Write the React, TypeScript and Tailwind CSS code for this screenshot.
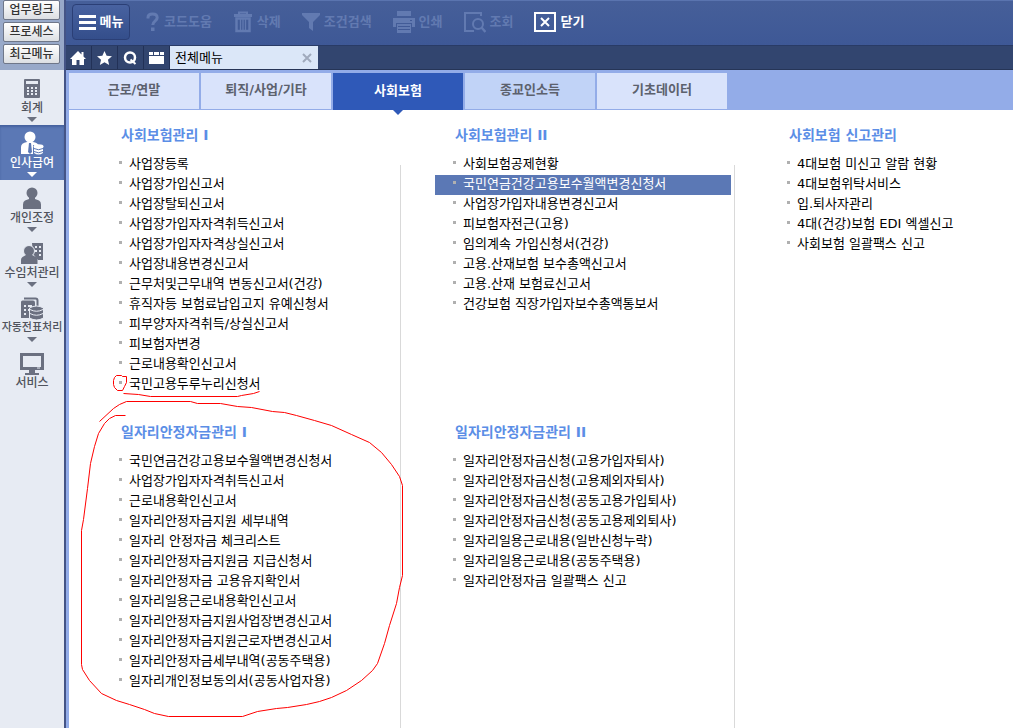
import type { ReactNode } from 'react';
import clsx from 'clsx';

// ── 타입 ──────────────────────────────────────────────────────────────────────
interface MenuGroup {
  title: string;
  items: string[];
}

interface ToolItem {
  label: string;
  icon: ReactNode;
  enabled?: boolean;
}

interface SideItem {
  label: string;
  icon: ReactNode;
  small?: boolean;
  active?: boolean;
  expandable?: boolean;
}

// ── 툴바 아이콘 ───────────────────────────────────────────────────────────────
const HelpIcon = () => (
  <svg width="14" height="20" viewBox="0 0 14 20" fill="none" aria-hidden="true">
    <path d="M2 6.5V5.5C2 3 4 2 6.5 2S11.2 3.2 11.2 5.8C11.2 9 6.8 8.8 6.8 13" stroke="currentColor" strokeWidth="3" />
    <path d="M5 15.5h3.5V19H5z" fill="currentColor" />
  </svg>
);

const TrashIcon = () => (
  <svg width="20" height="22" viewBox="0 0 20 22" fill="none" stroke="currentColor" aria-hidden="true">
    <path d="M1 4.5h18" strokeWidth="3" />
    <path d="M6 3V1.5h8V3" strokeWidth="2" />
    <path d="M3.5 7.5h13V20h-13z" strokeWidth="2.5" />
    <path d="M7.5 8v11M10 8v11M12.5 8v11" strokeWidth="1.3" />
  </svg>
);

const FunnelIcon = () => (
  <svg width="18" height="20" viewBox="0 0 18 20" fill="currentColor" aria-hidden="true">
    <path d="M0 1h18v2l-7 7v9l-4-3v-6L0 3z" />
  </svg>
);

const PrinterIcon = () => (
  <svg width="22" height="22" viewBox="0 0 22 22" aria-hidden="true">
    <path d="M4 0h14v5H4zM0 7h22v9h-3v-4H3v4H0z" fill="currentColor" />
    <path d="M4 13h14v9H4z" fill="currentColor" />
    <path d="M5 15.5h12M5 18.5h12" stroke="#405996" />
    <path d="M17 9h2v1h-2z" fill="#405996" />
  </svg>
);

const LookupIcon = () => (
  <svg width="22" height="21" viewBox="0 0 22 21" fill="none" stroke="currentColor" aria-hidden="true">
    <path d="M17 4V1H1v18h9" strokeWidth="2" />
    <circle cx="14" cy="12" r="5" strokeWidth="2" />
    <path d="m17.5 15.5 4 4.5" strokeWidth="2.5" />
  </svg>
);

const CloseBoxIcon = () => (
  <svg width="22" height="20" viewBox="0 0 22 20" fill="none" stroke="currentColor" strokeWidth="2" aria-hidden="true">
    <path d="M1 1h20v18H1z" />
    <path d="m7 6 8 8M15 6l-8 8" />
  </svg>
);

// ── 탭바 아이콘 ───────────────────────────────────────────────────────────────
const HomeIcon = () => (
  <svg width="16" height="14" viewBox="0 0 16 14" fill="currentColor" aria-hidden="true">
    <path d="M8 0 0 8h2v6h4.500V9h3v5H14V8h2L13.500 5.500V1h-2v2.500z" />
  </svg>
);

const StarIcon = () => (
  <svg width="15" height="14" viewBox="0 0 16 15" fill="currentColor" aria-hidden="true">
    <path d="m8 0 2.300 5.200L16 5.700l-4.300 3.800L13 15l-5-3-5 3 1.300-5.500L0 5.700l5.700-.5z" />
  </svg>
);

const SearchIcon = () => (
  <svg width="14" height="14" viewBox="0 0 14 14" fill="none" stroke="currentColor" aria-hidden="true">
    <circle cx="7" cy="6.500" r="5" strokeWidth="2.500" />
    <path d="m7.500 8.500 5 4.500" strokeWidth="2" />
  </svg>
);

const BoardIcon = () => (
  <svg width="15" height="13" viewBox="0 0 15 13" fill="currentColor" aria-hidden="true">
    <path d="M0 5h15v8H0zM0 1h4v3H0zM5 1h5v3H5zM11 1h4v3h-4z" />
  </svg>
);

// ── 사이드바 아이콘 ───────────────────────────────────────────────────────────
const CalculatorIcon = () => (
  <svg width="16" height="19" viewBox="0 0 16 19" aria-hidden="true">
    <rect width="16" height="19" rx="1" fill="currentColor" />
    <path
      d="M2 2h12v3H2zM3 8h2v2H3zM7 8h2v2H7zM11 8h2v2h-2zM3 11h2v2H3zM7 11h2v2H7zM11 11h2v2h-2zM3 14h2v2H3zM7 14h2v2H7zM11 14h2v2h-2z"
      fill="#e7ebf3"
    />
  </svg>
);

const PayrollIcon = () => (
  <svg width="24" height="24" viewBox="0 0 24 24" aria-hidden="true">
    <circle cx="10" cy="6" r="5.500" fill="currentColor" />
    <path d="M1 23v-7q0-4 6-5h6q5 1 5 3h-5v9z" fill="currentColor" />
    <path d="M9 12h2l1 9-2 2-2-2z" fill="#5b78b5" />
    <path d="M13 15.500h11V24H13z" fill="#5b78b5" />
    <path d="M14 16v6q4.500 3 9 0v-6" fill="currentColor" />
    <ellipse cx="18.500" cy="15.500" rx="5" ry="2.200" fill="currentColor" />
    <path d="M14 17.500q4.500 2.500 9 0M14 20.500q4.500 2.500 9 0" fill="none" stroke="#5b78b5" />
  </svg>
);

const PersonIcon = () => (
  <svg width="20" height="22" viewBox="0 0 20 22" fill="currentColor" aria-hidden="true">
    <circle cx="10" cy="6" r="5.500" />
    <path d="M7 9h6v3l4 1.500q2 1 2 4V22H1v-4.500q0-3 2-4L7 12z" />
  </svg>
);

const ClientIcon = () => (
  <svg width="22" height="22" viewBox="0 0 22 22" fill="currentColor" aria-hidden="true">
    <path d="M11 1h11v17h-5l-5-6z" />
    <path d="M14 4h2v2h-2zM18 4h2v2h-2zM14 8h2v2h-2zM18 8h2v2h-2zM18 12h2v2h-2z" fill="#e7ebf3" />
    <circle cx="8" cy="9" r="5.500" stroke="#e7ebf3" />
    <path d="M5 13h6l4 2q1.500 1 1.500 3v4H0v-4q0-2 1.500-3z" />
  </svg>
);

const SlipIcon = () => (
  <svg width="24" height="23" viewBox="0 0 24 23" aria-hidden="true">
    <path d="M4 1.500h11.500q2 0 2 2V10" fill="none" stroke="currentColor" strokeWidth="2" />
    <path d="M2.500 3.500H13q2 0 2 2V21H1V5q0-1.500 1.500-1.500z" fill="currentColor" />
    <path d="M4 8h2v2H4zM8 8h4v2H8zM4 12h2v2H4zM8 12h2v2H8zM4 16h2v2H4z" fill="#e7ebf3" />
    <path d="M9.500 11v10q7 4 14 0V11q-7-4-14 0z" fill="currentColor" stroke="#e7ebf3" />
    <path d="M10 12.500q6.500 3.500 13 0M10 16.500q6.500 3.500 13 0" fill="none" stroke="#e7ebf3" />
  </svg>
);

const MonitorIcon = () => (
  <svg width="24" height="23" viewBox="0 0 24 23" aria-hidden="true">
    <path d="M1.500 2.500h21v14h-21z" fill="none" stroke="currentColor" strokeWidth="3" />
    <path d="M9 18h6v3h4v2H5v-2h4z" fill="currentColor" />
    <path d="M17 15.500h3v1h-3z" fill="#e7ebf3" />
  </svg>
);

// ── 데이터 ────────────────────────────────────────────────────────────────────
const QUICK_LINKS = ['업무링크', '프로세스', '최근메뉴'];

const SIDE_ITEMS: SideItem[] = [
  { label: '회계', icon: <CalculatorIcon />, expandable: true },
  { label: '인사급여', icon: <PayrollIcon />, expandable: true, active: true },
  { label: '개인조정', icon: <PersonIcon />, expandable: true },
  { label: '수임처관리', icon: <ClientIcon />, expandable: true },
  { label: '자동전표처리', icon: <SlipIcon />, expandable: true, small: true },
  { label: '서비스', icon: <MonitorIcon /> },
];

const TOOLS: ToolItem[] = [
  { label: '코드도움', icon: <HelpIcon /> },
  { label: '삭제', icon: <TrashIcon /> },
  { label: '조건검색', icon: <FunnelIcon /> },
  { label: '인쇄', icon: <PrinterIcon /> },
  { label: '조회', icon: <LookupIcon /> },
  { label: '닫기', icon: <CloseBoxIcon />, enabled: true },
];

const SHORTCUTS = [
  { label: '홈', icon: <HomeIcon /> },
  { label: '즐겨찾기', icon: <StarIcon /> },
  { label: '검색', icon: <SearchIcon /> },
  { label: '달력', icon: <BoardIcon /> },
];

const CATEGORIES = ['근로/연말', '퇴직/사업/기타', '사회보험', '종교인소득', '기초데이터'];
const ACTIVE_CATEGORY = '사회보험';
const HOVERED_CATEGORY = '종교인소득';

const COLUMNS: MenuGroup[][] = [
  [
    {
      title: '사회보험관리 I',
      items: [
        '사업장등록',
        '사업장가입신고서',
        '사업장탈퇴신고서',
        '사업장가입자자격취득신고서',
        '사업장가입자자격상실신고서',
        '사업장내용변경신고서',
        '근무처및근무내역 변동신고서(건강)',
        '휴직자등 보험료납입고지 유예신청서',
        '피부양자자격취득/상실신고서',
        '피보험자변경',
        '근로내용확인신고서',
        '국민고용두루누리신청서',
      ],
    },
    {
      title: '일자리안정자금관리 I',
      items: [
        '국민연금건강고용보수월액변경신청서',
        '사업장가입자자격취득신고서',
        '근로내용확인신고서',
        '일자리안정자금지원 세부내역',
        '일자리 안정자금 체크리스트',
        '일자리안정자금지원금 지급신청서',
        '일자리안정자금 고용유지확인서',
        '일자리일용근로내용확인신고서',
        '일자리안정자금지원사업장변경신고서',
        '일자리안정자금지원근로자변경신고서',
        '일자리안정자금세부내역(공동주택용)',
        '일자리개인정보동의서(공동사업자용)',
      ],
    },
  ],
  [
    {
      title: '사회보험관리 II',
      items: [
        '사회보험공제현황',
        '국민연금건강고용보수월액변경신청서',
        '사업장가입자내용변경신고서',
        '피보험자전근(고용)',
        '임의계속 가입신청서(건강)',
        '고용.산재보험 보수총액신고서',
        '고용.산재 보험료신고서',
        '건강보험 직장가입자보수총액통보서',
      ],
    },
    {
      title: '일자리안정자금관리 II',
      items: [
        '일자리안정자금신청(고용가입자퇴사)',
        '일자리안정자금신청(고용제외자퇴사)',
        '일자리안정자금신청(공동고용가입퇴사)',
        '일자리안정자금신청(공동고용제외퇴사)',
        '일자리일용근로내용(일반신청누락)',
        '일자리일용근로내용(공동주택용)',
        '일자리안정자금 일괄팩스 신고',
      ],
    },
  ],
  [
    {
      title: '사회보험 신고관리',
      items: [
        '4대보험 미신고 알람 현황',
        '4대보험위탁서비스',
        '입.퇴사자관리',
        '4대(건강)보험 EDI 엑셀신고',
        '사회보험 일괄팩스 신고',
      ],
    },
  ],
];

// ── 사이드바 ──────────────────────────────────────────────────────────────────
const Sidebar = () => (
  <aside className="flex w-[66px] shrink-0 flex-col border-r-2 border-[#445486] bg-[#e7ebf3]">
    <div className="flex h-[70px] flex-col justify-end gap-0.5 bg-[#98a9c9] pr-1 pb-1.5 pl-[3px]">
      {QUICK_LINKS.map((label) => (
        <button
          key={label}
          type="button"
          className="h-5 shrink-0 rounded-xs border border-[#6f7789] bg-linear-to-b from-white to-[#dcdfe3] text-[12px] leading-4 font-medium text-[#333]"
        >
          {label}
        </button>
      ))}
    </div>
    <nav className="flex flex-col">
      {SIDE_ITEMS.map((item) => (
        <button
          key={item.label}
          type="button"
          className={clsx(
            'flex h-[55px] flex-col items-center pt-1.5 font-medium whitespace-nowrap',
            item.active ? 'bg-[#5b78b5] text-white shadow-[inset_0_2px_2px_#4763a0]' : 'text-[#6b7080]',
          )}
        >
          <span className="flex h-6 items-center">{item.icon}</span>
          <span
            className={clsx(
              'leading-4',
              item.small ? 'text-[11px]' : 'text-[12px]',
              item.active ? 'text-white' : 'text-[#50535c]',
            )}
          >
            {item.label}
          </span>
          {item.expandable && (
            <svg className="mt-px" width="10" height="5" viewBox="0 0 10 5" fill="currentColor" aria-hidden="true">
              <path d="M0 0h10L5 5z" />
            </svg>
          )}
        </button>
      ))}
    </nav>
  </aside>
);

// ── 상단 툴바 ─────────────────────────────────────────────────────────────────
const Toolbar = () => (
  <div className="flex h-[46px] items-center border-t border-b border-t-[#5a74af] border-b-[#293b66] bg-linear-to-b from-[#465f99] to-[#3e5896] pb-0.5 pl-1.5">
    <button
      type="button"
      className="mr-4 flex h-9 w-[58px] items-center justify-center gap-1 rounded-sm border border-[#2b3f76] bg-linear-to-b from-[#4862a0] to-[#344e8b] text-[13px] font-bold text-white"
    >
      <svg width="17" height="15" viewBox="0 0 17 15" fill="currentColor" aria-hidden="true">
        <path d="M0 0h17v3H0zM0 6h17v3H0zM0 12h17v3H0z" />
      </svg>
      메뉴
    </button>
    <div className="flex gap-[21px]">
      {TOOLS.map((tool) => (
        <button
          key={tool.label}
          type="button"
          disabled={!tool.enabled}
          className={clsx(
            'flex items-center gap-1 text-[13px] font-bold whitespace-nowrap',
            tool.enabled ? 'text-white' : 'text-[#627ab1]',
          )}
        >
          {tool.icon}
          {tool.label}
        </button>
      ))}
    </div>
  </div>
);

// ── 열린 화면 탭 ──────────────────────────────────────────────────────────────
const WindowTabs = () => (
  <div className="flex h-6 border-b border-[#263557] bg-[#32456f]">
    {SHORTCUTS.map((item) => (
      <button
        key={item.label}
        type="button"
        aria-label={item.label}
        className="flex w-[26px] items-center justify-center border-r border-[#223157] pr-px text-white"
      >
        {item.icon}
      </button>
    ))}
    <div className="flex w-[148px] items-center justify-between bg-[#dbe7f8] pr-1.5 pl-[5px]">
      <span className="text-[13px] leading-5 text-black">전체메뉴</span>
      <button type="button" aria-label="닫기" className="text-[#a0aabd]">
        <svg width="10" height="10" viewBox="0 0 10 10" stroke="currentColor" strokeWidth="2" aria-hidden="true">
          <path d="m1 1 8 8M9 1 1 9" />
        </svg>
      </button>
    </div>
  </div>
);

// ── 카테고리 탭 ───────────────────────────────────────────────────────────────
const CategoryTabs = () => (
  <nav className="flex h-10 gap-0.5 bg-[#93ace8] pt-[3px]">
    {CATEGORIES.map((label) => {
      const active = label === ACTIVE_CATEGORY;
      return (
        <button
          key={label}
          type="button"
          className={clsx(
            'relative w-[130px] pb-0.5 text-[13px] font-bold whitespace-nowrap',
            active && 'bg-[#2f59b8] text-white',
            !active && 'mb-px text-[#5c616d]',
            !active && (label === HOVERED_CATEGORY ? 'bg-[#c1d3f7]' : 'bg-[#d9e3fb]'),
          )}
        >
          {label}
          {active && (
            <svg className="absolute top-full left-[60px]" width="10" height="5" viewBox="0 0 10 5" aria-hidden="true">
              <path d="M0 0h10L5 5z" fill="#2f59b8" />
            </svg>
          )}
        </button>
      );
    })}
  </nav>
);

// ── 메뉴 그룹 ─────────────────────────────────────────────────────────────────
const MenuSection = ({ group, selected }: { group: MenuGroup; selected?: string }) => (
  <section className="min-h-[297px]">
    <h2 className="mb-2.5 pl-5 text-[14px] leading-5 font-bold text-[#5b8ee6]">{group.title}</h2>
    <ul>
      {group.items.map((item) => (
        <li key={item}>
          <a
            href="#"
            className={clsx(
              'flex h-5 gap-[7px] pl-[18px] text-[13px] leading-[18px] whitespace-nowrap',
              item === selected ? 'bg-[#5b78b5] text-white' : 'text-black',
            )}
          >
            <span className="mt-1.5 size-[3px] shrink-0 bg-[#b0b0b0]" />
            {item}
          </a>
        </li>
      ))}
    </ul>
  </section>
);

// ── 펜 표시 ───────────────────────────────────────────────────────────────────
const PenMarks = () => (
  <svg
    className="pointer-events-none absolute top-0 left-0"
    width="344"
    height="618"
    viewBox="69 110 344 618"
    fill="none"
    stroke="#f00"
    aria-hidden="true"
  >
    <path d="M116.500 375.500h5l1 1h4v6l-2 4-2 4h-5l-3-3-1-3v-4l1-3 2-2" />
    <path d="M123.500 393.500l15 1 12 2h87l4-1 12-2 6-2" />
    <path d="M99.500 421.500 113.500 408.500 119.500 404.500 126.500 401.500 190.500 401.500 197.500 403.500 220.500 403.500 237.500 406.500 251.500 407.500 272.500 411.500 284.500 412.500 296.500 415.500 314.500 420.500 331.500 425.500 351.500 434.500 369.500 442.500 381.500 452.500 391.500 464.500 399.500 476.500 402.500 485.500 402.500 575.500 399.500 587.500 396.500 603.500 389.500 625.500 384.500 643.500 377.500 663.500 372.500 670.500 361.500 680.500 346.500 690.500 331.500 697.500 319.500 701.500 306.500 704.500 287.500 707.500 276.500 708.500 257.500 711.500 242.500 716.500 168.500 716.500 154.500 713.500 144.500 709.500 129.500 704.500 116.500 700.500 101.500 693.500 89.500 680.500 82.500 669.500 81.500 664.500 81.500 530.500 83.500 519.500 87.500 488.500 90.500 463.500 94.500 446.500 98.500 433.500 104.500 423.500 109.500 418.500 115.500 415.500 125.500 415.500" />
  </svg>
);

// ── 메인 컴포넌트 ─────────────────────────────────────────────────────────────
const App = () => (
  <div className="flex min-h-screen bg-white font-['DejaVu_Sans','Noto_Sans_CJK_KR',sans-serif]">
    <Sidebar />
    <div className="flex min-w-0 flex-1 flex-col">
      <Toolbar />
      <WindowTabs />
      <div className="flex flex-1 flex-col border-l-[3px] border-[#93ace8]">
        <CategoryTabs />
        <main className="relative grid flex-1 grid-cols-[332fr_334fr_278fr]">
          {COLUMNS.map((groups, index) => (
            <div key={groups[0].title} className={clsx('flex', index === 0 ? 'pl-8' : 'pl-[34px]')}>
              <div className="min-w-0 flex-1 pt-[15px] pr-[3px]">
                {groups.map((group) => (
                  <MenuSection
                    key={group.title}
                    group={group}
                    selected={index === 1 ? '국민연금건강고용보수월액변경신청서' : undefined}
                  />
                ))}
              </div>
              {index < COLUMNS.length - 1 && <div className="mt-[55px] w-px bg-[#d9d9d9]" />}
            </div>
          ))}
          <PenMarks />
        </main>
      </div>
    </div>
  </div>
);

export default App;
